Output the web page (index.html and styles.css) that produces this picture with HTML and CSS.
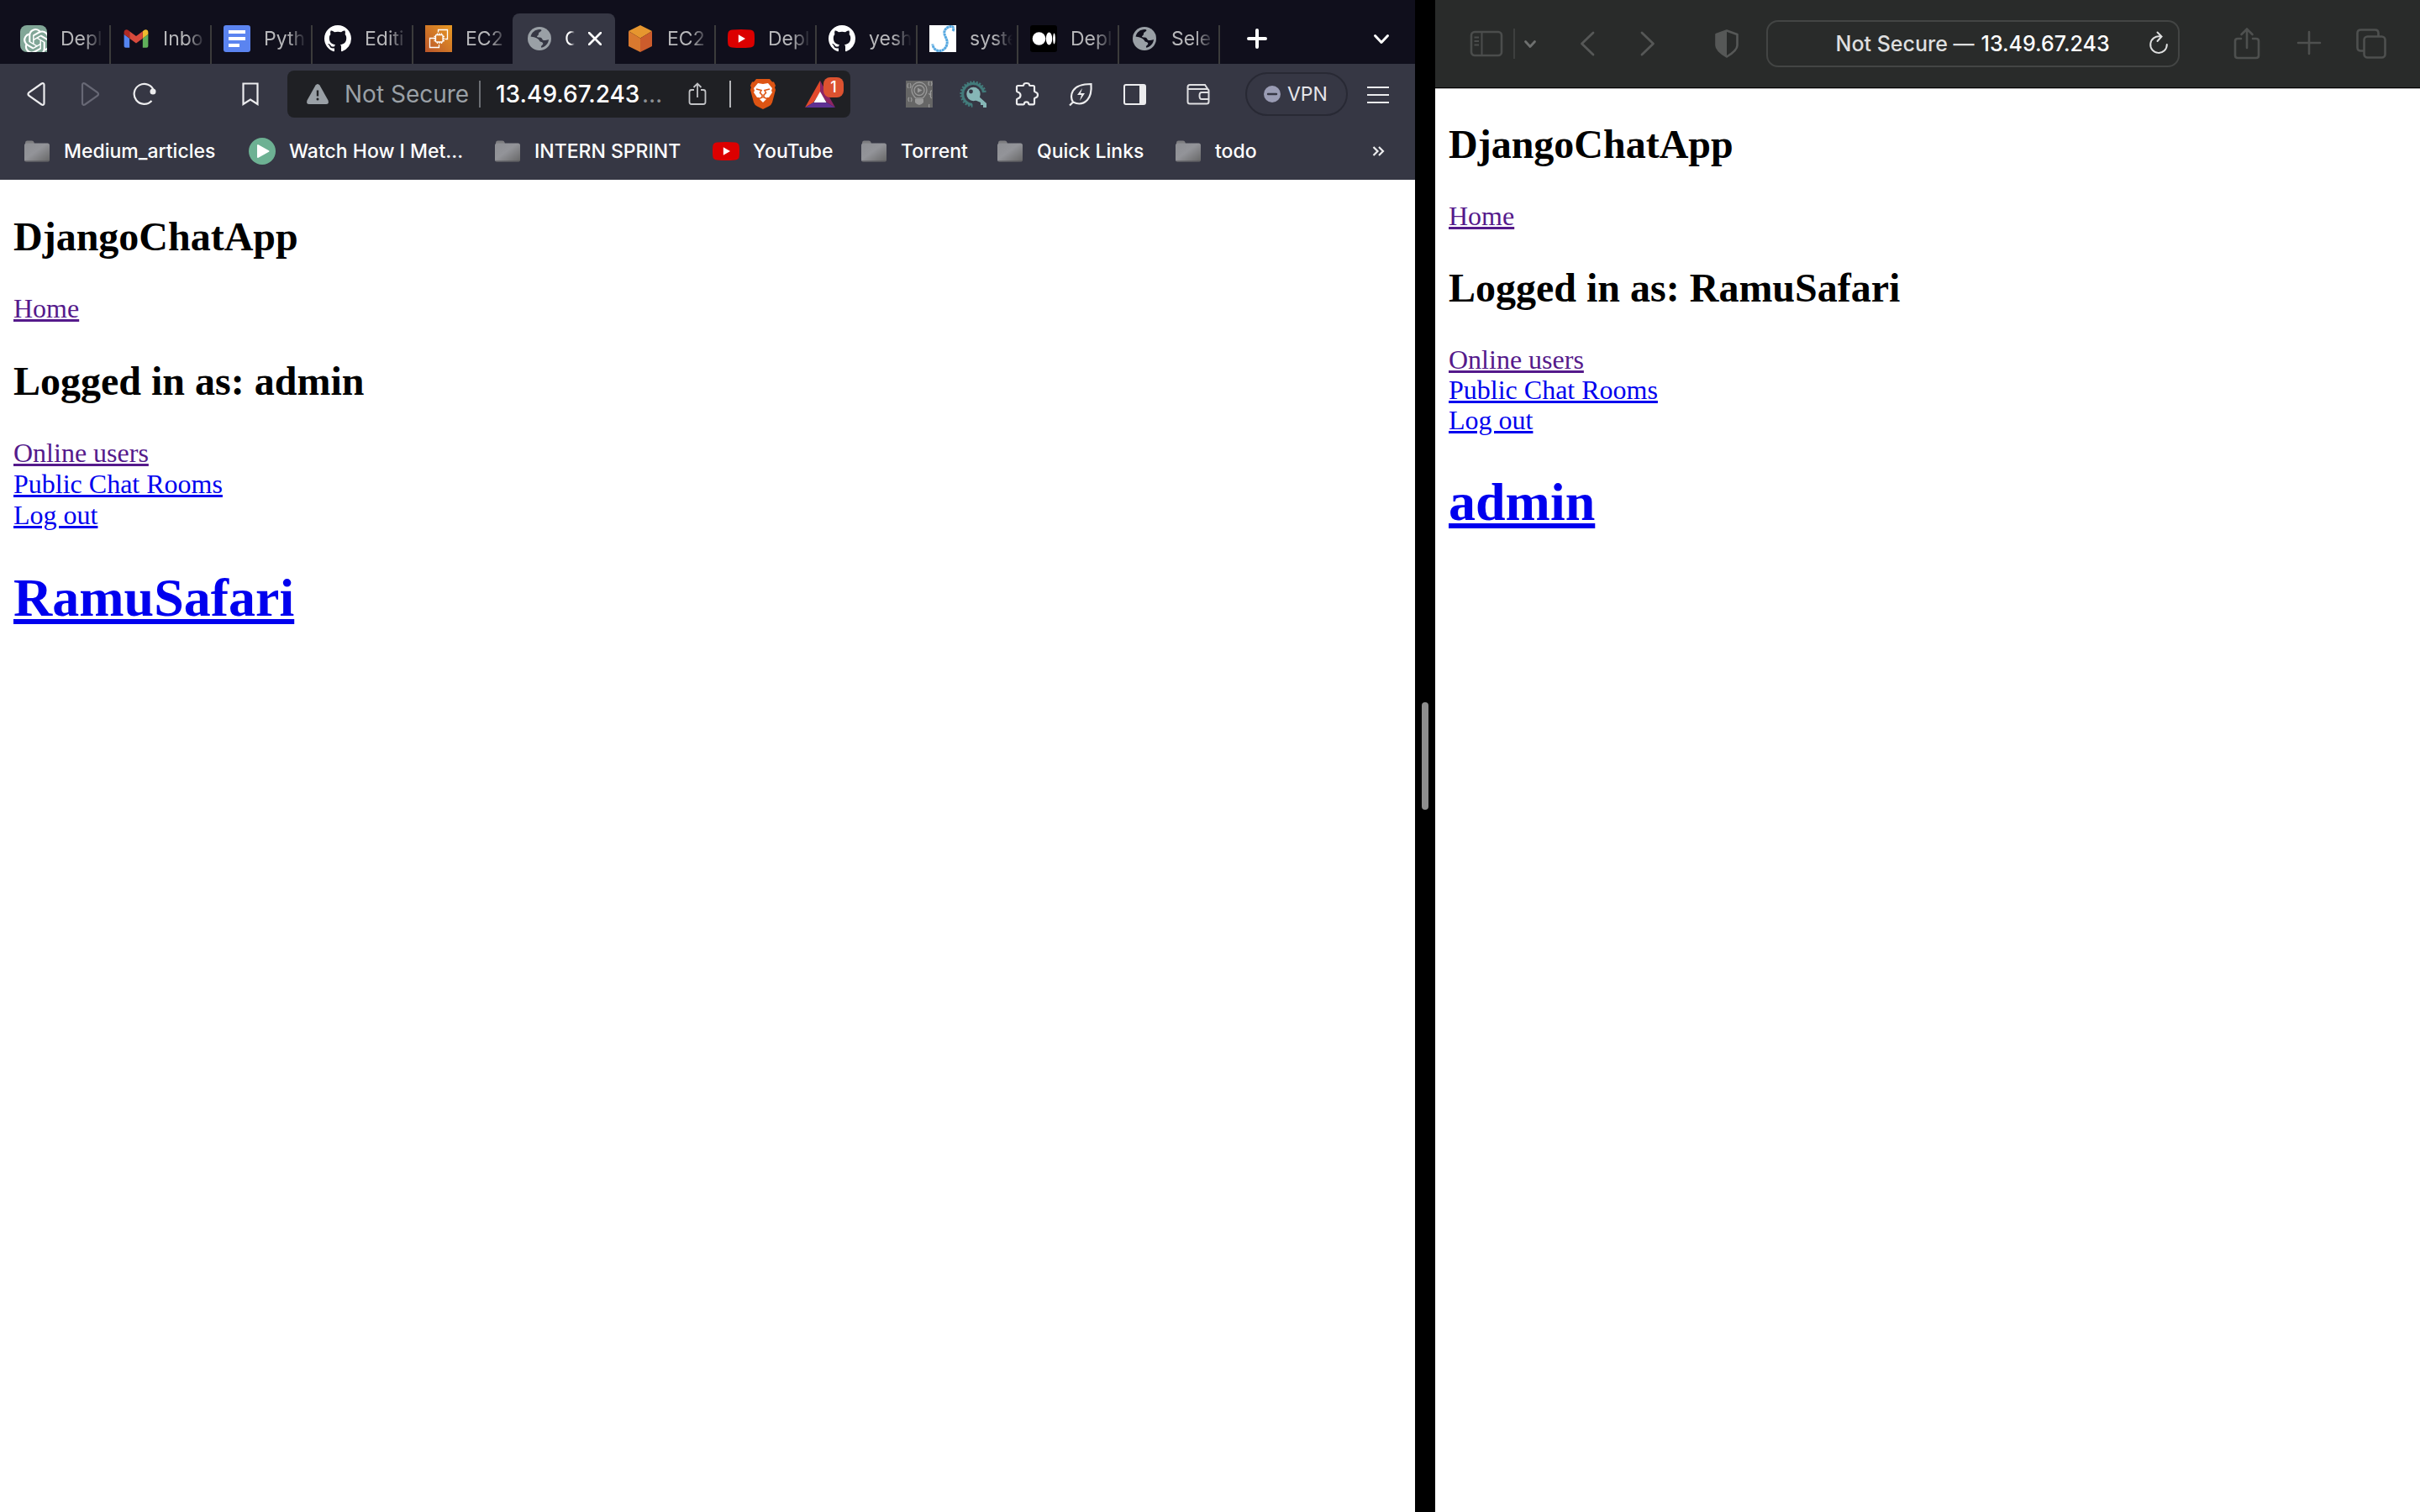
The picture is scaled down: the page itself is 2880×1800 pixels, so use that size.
FILE: index.html
```html
<!DOCTYPE html>
<html lang="en">
<head>
<meta charset="utf-8">
<title>DjangoChatApp</title>
<link rel="stylesheet" href="styles.css">
</head>
<body>
<svg class="sprite" aria-hidden="true">
  <defs>
    <linearGradient id="folderFill" x1="0" y1="0" x2="1" y2="1"><stop offset="0" stop-color="#8d8e93"/><stop offset=".45" stop-color="#939499"/><stop offset="1" stop-color="#666"/></linearGradient>
    <linearGradient id="ec2Fill" x1="0" y1="1" x2="1" y2="0"><stop offset="0" stop-color="#b9552a"/><stop offset="1" stop-color="#e99a24"/></linearGradient>
  </defs>
  <symbol id="folder" viewBox="0 0 32 32">
    <path d="M2 6.500q0-3 2.500-3H10q2 0 2.500 2l.5 2H2z" fill="#7d7d80"/>
    <rect x="1" y="6.500" width="30" height="22" rx="2.500" fill="url(#folderFill)"/>
    <path d="M2 28h28" stroke="#55555a" stroke-width="1"/>
  </symbol>
  <symbol id="globe" viewBox="0 0 32 32">
    <circle cx="16" cy="16" r="14" fill="#9aa0a6"/>
    <path d="M5.500 13.500C6.800 8.500 11 5 16 5c1.500 0 2 .3 2.500 1-.2 1.800-3.500 2-3.500 4.200 0 1.300-.6 2-1.600 2.600-1 .8.300 2 2 1.700 2.600-.3 3.600.7 4 2.300.4 1.500 2.600 1.300 4.800 1 1-.2 2-.4 2.800-.8-.4 4.800-4 8.700-8.600 9.700-1-.8-.3-2.200.6-2.800 1.600-1.200 1.700-2.500.4-3.500-1.200-.9-2.600-.3-3.200-1.700-.8-2-2.500-3-5.200-4-2-.8-4-.8-5.500-1.200z" fill="var(--under)"/>
  </symbol>
  <symbol id="youtube" viewBox="0 0 32 32">
    <path d="M5 5.500q11-1 22 0 4.500.3 4.800 5 .4 5.500 0 11-.3 4.700-4.800 5-11 1-22 0-4.500-.3-4.800-5-.4-5.500 0-11 .3-4.700 4.800-5z" fill="#dc0000"/>
    <path d="M12.800 11.200v9.600l8.200-4.800z" fill="#fff"/>
  </symbol>
  <symbol id="github" viewBox="0 0 16 16">
    <path fill="#fff" d="M8 0C3.580 0 0 3.580 0 8c0 3.540 2.290 6.530 5.470 7.590.4.070.55-.17.55-.38 0-.19-.01-.82-.01-1.490-2.010.37-2.530-.49-2.690-.94-.09-.23-.48-.94-.82-1.130-.28-.15-.68-.52-.01-.53.63-.01 1.080.58 1.230.82.72 1.210 1.870.87 2.330.66.07-.52.28-.87.51-1.070-1.780-.2-3.640-.89-3.640-3.950 0-.87.31-1.590.82-2.150-.08-.2-.36-1.020.08-2.120 0 0 .67-.21 2.200.82.64-.18 1.320-.27 2-.27s1.360.09 2 .27c1.530-1.040 2.200-.82 2.200-.82.44 1.100.16 1.920.08 2.120.51.56.82 1.270.82 2.150 0 3.070-1.870 3.750-3.650 3.950.29.25.54.73.54 1.480 0 1.070-.01 1.930-.01 2.200 0 .21.150.46.550.380A8.010 8.010 0 0016 8c0-4.420-3.580-8-8-8z"/>
  </symbol>
</svg>

<div class="screen">
  <section class="window brave" aria-label="Brave">
    <header>
      <nav class="tabs" aria-label="Tabs">
        <a class="tab" href="#t1"><svg viewBox="0 0 32 32"><path d="M8 0h16a8 8 0 018 8v24H8a8 8 0 01-8-8V8a8 8 0 018-8z" fill="#81a697"/><svg x="4" y="4" width="24" height="24" viewBox="0 0 24 24"><path fill="#fff" d="M22.2819 9.8211a5.9847 5.9847 0 0 0-.5157-4.9108 6.0462 6.0462 0 0 0-6.5098-2.900A6.0651 6.0651 0 0 0 4.9807 4.1818a5.9847 5.9847 0 0 0-3.9977 2.900 6.0462 6.0462 0 0 0 .7427 7.0966 5.980 5.980 0 0 0 .511 4.9107 6.051 6.051 0 0 0 6.5146 2.9001A5.9847 5.9847 0 0 0 13.2599 24a6.0557 6.0557 0 0 0 5.7718-4.2058 5.9894 5.9894 0 0 0 3.9977-2.9001 6.0557 6.0557 0 0 0-.7475-7.0729zm-9.022 12.6081a4.4755 4.4755 0 0 1-2.8764-1.0408l.1419-.0804 4.7783-2.7582a.7948.7948 0 0 0 .3927-.6813v-6.7369l2.020 1.1686a.071.071 0 0 1 .038.052v5.5826a4.504 4.504 0 0 1-4.4945 4.4944zm-9.6607-4.1254a4.4708 4.4708 0 0 1-.5346-3.0137l.142.0852 4.783 2.7582a.7712.7712 0 0 0 .7806 0l5.8428-3.3685v2.3324a.0804.0804 0 0 1-.0332.0615L9.740 19.9502a4.4992 4.4992 0 0 1-6.1408-1.6464zM2.3408 7.8956a4.485 4.485 0 0 1 2.3655-1.9728V11.600a.7664.7664 0 0 0 .3879.6765l5.8144 3.3543-2.0201 1.1685a.0757.0757 0 0 1-.071 0l-4.8303-2.7865A4.504 4.504 0 0 1 2.3408 7.872zm16.5963 3.8558L13.1038 8.364 15.1192 7.200a.0757.0757 0 0 1 .071 0l4.8303 2.7913a4.4944 4.4944 0 0 1-.6765 8.1042v-5.6772a.790.790 0 0 0-.407-.667zm2.0107-3.0231l-.142-.0852-4.7735-2.7818a.7759.7759 0 0 0-.7854 0L9.409 9.2297V6.8974a.0662.0662 0 0 1 .0284-.0615l4.8303-2.7866a4.4992 4.4992 0 0 1 6.6802 4.660zM8.3065 12.863l-2.020-1.1638a.0804.0804 0 0 1-.038-.0567V6.0742a4.4992 4.4992 0 0 1 7.3757-3.4537l-.142.0805L8.704 5.459a.7948.7948 0 0 0-.3927.6813zm1.0976-2.3654l2.602-1.4998 2.6069 1.4998v2.9994l-2.5974 1.4997-2.6067-1.4997Z"/></svg></svg><span>Depl</span></a>
        <a class="tab" href="#t2"><svg viewBox="47 26 98 98"><path fill="#5585f0" d="M58 108h14V74L52 59v43c0 3.320 2.690 6 6 6"/><path fill="#5fb05a" d="M120 108h14c3.320 0 6-2.690 6-6V59l-20 15"/><path fill="#efbc2f" d="M120 48v26l20-15v-8c0-7.420-8.470-11.650-14.400-7.200"/><path fill="#d84a3c" d="M72 74V48l24 18 24-18v26L96 92"/><path fill="#b02a24" d="M52 51v8l20 15V48l-5.600-4.200c-5.940-4.450-14.400-.22-14.400 7.200"/></svg><span>Inbo</span></a>
        <a class="tab" href="#t3"><svg viewBox="0 0 32 32"><rect width="32" height="32" rx="3" fill="#5b84f0"/><path d="M6 8h20M6 16h20M6 24h13" stroke="#fff" stroke-width="4"/></svg><span>Pyth</span></a>
        <a class="tab" href="#t4"><svg><use href="#github"/></svg><span>Editi</span></a>
        <a class="tab tab-before" href="#t5"><svg viewBox="0 0 32 32"><path d="M0 0h32v32H0z" fill="url(#ec2Fill)"/><g fill="none" stroke="#fff" stroke-width="1.300"><path d="M15.500 8.500v-3h11v11h-3M12 15.500H5.500v11h11V23"/><rect x="12.500" y="11.500" width="8.500" height="8.500" rx="1"/><path d="M14.500 11.500v-2M17 11.500v-2M19.500 11.500v-2M14.500 20v2M17 20v2M19.500 20v2M12.500 13.500h-2M12.500 16h-2M12.500 18.500h-2M21 13.500h2M21 16h2M21 18.500h2"/></g></svg><span>EC2</span></a>
        <div class="tab tab-active"><svg><use href="#globe"/></svg><span>C</span><button class="bare tab-close" aria-label="Close tab"><svg viewBox="0 0 16 16"><path d="M1 1l14 14M15 1L1 15" stroke="#fff" stroke-width="2.600" stroke-linecap="round"/></svg></button></div>
        <a class="tab" href="#t7"><svg viewBox="0 0 32 32"><path d="M16 0l14 7-14 8.500L2 7z" fill="#e6962f"/><path d="M2 7l14 8.500V32L2 25z" fill="#d9792f"/><path d="M30 7l-14 8.500V32l14-7z" fill="#cc5c2c"/></svg><span>EC2</span></a>
        <a class="tab" href="#t8"><svg><use href="#youtube"/></svg><span>Depl</span></a>
        <a class="tab" href="#t9"><svg><use href="#github"/></svg><span>yesh</span></a>
        <a class="tab" href="#t10"><svg viewBox="0 0 32 32"><path d="M0 0h32v32H0z" fill="#fff"/><path d="M28 7c2-4 0-6-3-5.500-5 .8-8 5-7 9 .8 3.500 4 7 3 12-1 5-5 8.500-10 8-4-.5-7-4-7-8" fill="none" stroke="#56a8e0" stroke-width="3" stroke-dasharray="3 .4"/></svg><span>syste</span></a>
        <a class="tab" href="#t11"><svg viewBox="0 0 32 32"><rect width="32" height="32" rx="3"/><g fill="#fff"><circle cx="10.500" cy="16" r="7.800"/><ellipse cx="22.500" cy="16" rx="3.700" ry="7.400"/><ellipse cx="28.500" cy="16" rx="1.400" ry="6.500"/></g></svg><span>Depl</span></a>
        <a class="tab" href="#t12"><svg><use href="#globe"/></svg><span>Sele</span></a>
        <button class="bare tab-new" aria-label="New tab"><svg viewBox="0 0 32 32"><path d="M16 6v20M6 16h20" stroke="#fff" stroke-width="4" stroke-linecap="round"/></svg></button>
        <button class="bare tab-search" aria-label="Search tabs"><svg viewBox="0 0 32 32"><path d="M8.500 12.500l7.500 8 7.500-8" fill="none" stroke="#fff" stroke-width="3" stroke-linecap="round" stroke-linejoin="round"/></svg></button>
      </nav>

      <div class="toolbar">
        <div class="nav-buttons">
          <button class="bare" aria-label="Back"><svg viewBox="0 0 28 28"><path d="M19.500 1.500c2-1 3 0 3 1.500v22c0 1.500-1 2.500-3 1.500L4.500 16q-2-2 0-4z" fill="none" stroke="#ececee" stroke-width="2.200"/></svg></button>
          <button class="bare" aria-label="Forward" disabled><svg viewBox="0 0 28 28"><path d="M7 1.500c-2-1-3 0-3 1.500v22c0 1.500 1 2.500 3 1.500L22 16q2-2 0-4z" fill="none" stroke="#676875" stroke-width="2.200"/></svg></button>
          <button class="bare" aria-label="Reload"><svg viewBox="0 0 28 28"><path d="M25 10A12 12 0 1022.500 22" fill="none" stroke="#ececee" stroke-width="2.200"/><circle cx="24" cy="11" r="3.500" fill="#ececee"/></svg></button>
        </div>
        <button class="bare bookmark-page" aria-label="Bookmark this page"><svg viewBox="0 0 28 28"><path d="M5.500 1.500h17v24.500L14 20.500 5.500 26z" fill="none" stroke="#ececee" stroke-width="2.200"/></svg></button>
        <div class="omnibox">
          <svg class="i28" viewBox="0 0 28 28"><path d="M11.500 3.500q2.500-3 5 0l10 18q1.500 4.500-2.500 4.500H4q-4 0-2.500-4.500z" fill="#9aa0a6"/><path d="M14 9.500v7" stroke="#202124" stroke-width="2.400"/><circle cx="14" cy="20" r="1.500" fill="#202124"/></svg>
          <label class="insecure" for="url">Not Secure</label>
          <span class="rule rule-dim"></span>
          <input id="url" class="url" value="13.49.67.243"><span class="url-more">…</span>
          <button class="bare share" aria-label="Share"><svg viewBox="0 0 28 28"><path d="M10 9H7q-2.500 0-2.500 2.500v12Q4.500 26 7 26h14q2.500 0 2.500-2.500v-12Q23.500 9 21 9h-3M14 18V1.500M9.500 6L14 1.500 18.500 6" fill="none" stroke="#c2c3c6" stroke-width="1.800"/></svg></button>
          <span class="rule"></span>
          <button class="bare shields" aria-label="Brave Shields"><svg viewBox="0 0 32 36"><path d="M8 0h16l3 3.500 2 0 2 4.500-1 2 1 3-4 15q-1 3-4 4.500L16 36l-7-3.500q-3-1.500-4-4.500L1 13l1-3-1-2 2-4.500h2z" fill="#dd5413"/><path d="M10 5l6 1 6-1 5 6-1 3 1 2-4 6-2 0-1 2-4 4-4-4-1-2-2 0-4-6 1-2-1-3z" fill="#fff"/><path d="M8 12l6 1.500-1.500 3L15 19v3l-4 1.500M24 12l-6 1.500 1.500 3L17 19v3l4 1.500" fill="none" stroke="#dd5413" stroke-width="1.600"/></svg></button>
          <button class="bare rewards" aria-label="Brave Rewards, 1 notification"><svg viewBox="0 0 40 36"><path d="M20 2L2 34l10-6 8-12z" fill="#e2492c"/><path d="M20 2l18 32-10-6-8-12z" fill="#8d2565"/><path d="M2 34h36l-10-6H12z" fill="#5e3192"/><path d="M20 15l-7.500 13h15z" fill="#fff"/></svg><span class="badge">1</span></button>
        </div>
        <div class="extensions">
          <button class="bare" aria-label="Code ideas"><svg viewBox="0 0 32 32"><path d="M0 0h32v32H0z" fill="#666"/><g fill="none" stroke="#999" stroke-width="1.300"><path d="M12 21q-5-5-5-10a9 9 0 0118 0q0 5-5 10zM3 3q-2 3 0 6M5 9q2-3 0-6M28 1q-2 2 0 5M30 6q2-2 0-5M4 20q-2 2 0 5M6 25q2-2 0-5M31 12q-2 0-1.500 3t-1.500 1q2 0 1.500 2t1.500 3M28 28q-1 2 0 4"/><circle cx="16" cy="11.500" r="6"/></g><path d="M14 8.500v6l5.500-3z" fill="#999"/><path d="M11 22h10v4q-5 6-10 0z" fill="#999"/></svg></button>
          <button class="bare" aria-label="Key finder"><svg viewBox="0 0 32 32"><path d="M30 14A14 14 0 1015.500 30" fill="none" stroke="#427b7b" stroke-width="3.500" stroke-dasharray="2 1.600"/><path d="M28.500 14A12.500 12.500 0 1015 28.500" fill="none" stroke="#427b7b" stroke-width="3"/><circle cx="16.500" cy="16" r="8.200" fill="#86b6b6"/><path d="M18 23l4-5 10 9v5h-4v-3h-3v-3z" fill="#86b6b6"/><circle cx="13.500" cy="13" r="2.400" fill="#363744"/></svg></button>
          <button class="bare" aria-label="Extensions"><svg viewBox="0 0 32 32"><path d="M4 7.500q0-1.500 1.500-1.500h6q.8 0 .8-1 0-2 3.300-2t3.400 2q0 1 .9 1h3.600Q25 6 25 7.500v5q0 1 1.500 1.200 2.500.8 2.500 3.300t-2.500 3.300Q25 20.500 25 21.500v5.300q0 1.500-1.500 1.500H19q-1 0-1-1 0-2-2.500-2T13 27.300q0 1-1 1H5.500Q4 28.300 4 26.800v-4q0-1 1-1.300 3.500-1 3.500-4T5 13.500q-1-.3-1-1.300z" fill="none" stroke="#ececee" stroke-width="2.200"/></svg></button>
          <button class="bare" aria-label="Performance"><svg viewBox="0 0 32 32"><path d="M3 29.500l4-4Q3 19 7 12 12 4 28.500 4q1 13-4.500 19-7 7.500-17 2.500" fill="none" stroke="#ececee" stroke-width="2.200"/><path d="M18 9l-6 8h5l-2 7 6-9h-5z" fill="#ececee"/></svg></button>
          <button class="bare" aria-label="Sidebar"><svg viewBox="0 0 32 32"><rect x="4" y="5" width="25" height="23" rx="2" fill="none" stroke="#ececee" stroke-width="2"/><path d="M22 5h7v23h-7z" fill="#ececee"/></svg></button>
        </div>
        <button class="bare wallet" aria-label="Wallet"><svg viewBox="0 0 32 32"><path d="M27 11V9.500L24 5H6q-2.500 0-2.500 2.500v17.500q0 2.500 2.500 2.500h20q2.500 0 2.500-2.500V12q0-2-2.500-2H4M29 14h-9q-2.500 0-2.500 4t2.500 4h9" fill="none" stroke="#dfdfe2" stroke-width="2"/></svg></button>
        <button class="vpn"><svg viewBox="0 0 20 20"><circle cx="10" cy="10" r="10" fill="#9a9cb4"/><path d="M5 10h10" stroke="#363744" stroke-width="2.400" stroke-linecap="round"/></svg>VPN</button>
        <button class="bare menu" aria-label="Menu"><svg viewBox="0 0 32 32"><path d="M3 8h26M3 17h26M3 26h26" stroke="#ececee" stroke-width="2.200"/></svg></button>
      </div>

      <nav class="bookmarks" aria-label="Bookmarks">
        <a href="#b1"><svg><use href="#folder"/></svg>Medium_articles</a>
        <a href="#b2"><svg viewBox="0 0 32 32"><circle cx="16" cy="16" r="16" fill="#6db193"/><path d="M11 9v14l12.500-7z" fill="#fff" stroke="#fff" stroke-width="2" stroke-linejoin="round"/></svg>Watch How I Met…</a>
        <a href="#b3"><svg><use href="#folder"/></svg>INTERN SPRINT</a>
        <a href="#b4"><svg><use href="#youtube"/></svg>YouTube</a>
        <a href="#b5"><svg><use href="#folder"/></svg>Torrent</a>
        <a href="#b6"><svg><use href="#folder"/></svg>Quick Links</a>
        <a href="#b7"><svg><use href="#folder"/></svg>todo</a>
        <button class="bare" aria-label="More bookmarks"><svg viewBox="0 0 32 32"><path d="M10.500 11l5 5-5 5M17 11l5 5-5 5" fill="none" stroke="#ececee" stroke-width="2.200"/></svg></button>
      </nav>
    </header>
    <main class="page">
      <h2>DjangoChatApp</h2>
      <a class="visited" href="#home">Home</a>
      <h2>Logged in as: admin</h2>
      <div><a class="visited" href="#users">Online users</a></div>
      <div><a href="#rooms">Public Chat Rooms</a></div>
      <div><a href="#logout">Log out</a></div>
      <h1><a href="#ramusafari">RamuSafari</a></h1>
    </main>
  </section>

  <div class="divider" role="separator" aria-orientation="vertical"><span class="grip"></span></div>

  <section class="window safari" aria-label="Safari">
    <header class="safari-bar">
      <button class="bare sidebar" aria-label="Sidebar"><svg viewBox="0 0 40 32"><rect x="2" y="2" width="36" height="28" rx="4" fill="none" stroke="#4b4d4c" stroke-width="2.600"/><path d="M14.500 2v28M5.500 8.500H11M5.500 13H11M5.500 17.500H11" stroke="#4b4d4c" stroke-width="2"/></svg></button>
      <span class="safari-rule"></span>
      <button class="bare groups" aria-label="Tab groups"><svg viewBox="0 0 20 20"><path d="M4.500 7.500l5.500 6 5.500-6" fill="none" stroke="#6e706f" stroke-width="2.800" stroke-linecap="round" stroke-linejoin="round"/></svg></button>
      <button class="bare back" aria-label="Back" disabled><svg viewBox="0 0 28 32"><path d="M21 3L7.500 16 21 29" fill="none" stroke="#565857" stroke-width="2.800" stroke-linecap="round" stroke-linejoin="round"/></svg></button>
      <button class="bare forward" aria-label="Forward" disabled><svg viewBox="0 0 28 32"><path d="M7 3l13.500 13L7 29" fill="none" stroke="#565857" stroke-width="2.800" stroke-linecap="round" stroke-linejoin="round"/></svg></button>
      <button class="bare privacy" aria-label="Privacy report"><svg viewBox="0 0 32 36"><path d="M16 2.500L3.500 7v13q0 6 12.500 13.500Q28.500 26 28.500 20V7z" fill="none" stroke="#565857" stroke-width="2.600" stroke-linejoin="round"/><path d="M16 2.500L3.500 7v13q0 6 12.500 13.500z" fill="#565857"/></svg></button>
      <div class="address">
        <label for="address">Not Secure —</label>
        <input id="address" value="13.49.67.243">
        <button class="bare reload" aria-label="Reload"><svg viewBox="0 0 24 28"><path d="M14 6.500A9.800 9.800 0 1021.800 16M10.500 1.500L15.500 6.500 10.500 12" fill="none" stroke="#dedfdf" stroke-width="2" stroke-linecap="round"/></svg></button>
      </div>
      <div class="safari-actions">
        <button class="bare" aria-label="Share"><svg viewBox="0 0 40 40"><path d="M13 14H9q-3 0-3 3v17q0 3 3 3h22q3 0 3-3V17q0-3-3-3h-4M20 25V3M13.500 9L20 2.500 26.500 9" fill="none" stroke="#4e504f" stroke-width="2.600" stroke-linecap="round"/></svg></button>
        <button class="bare" aria-label="New tab"><svg viewBox="0 0 40 40"><path d="M20 6v26M7 19h26" stroke="#4e504f" stroke-width="2.600" stroke-linecap="round"/></svg></button>
        <button class="bare" aria-label="Tab overview"><svg viewBox="0 0 40 40"><rect x="11.500" y="11.500" width="25" height="25" rx="4" fill="none" stroke="#4e504f" stroke-width="2.600"/><path d="M11 28.500H7.500q-4 0-4-4v-17q0-4 4-4h17q4 0 4 4V11" fill="none" stroke="#4e504f" stroke-width="2.600"/></svg></button>
      </div>
    </header>
    <main class="page">
      <h2>DjangoChatApp</h2>
      <a class="visited" href="#home-2">Home</a>
      <h2>Logged in as: RamuSafari</h2>
      <div><a class="visited" href="#users-2">Online users</a></div>
      <div><a href="#rooms-2">Public Chat Rooms</a></div>
      <div><a href="#logout-2">Log out</a></div>
      <h1><a href="#admin">admin</a></h1>
    </main>
  </section>
</div>
</body>
</html>
```
FILE: styles.css
```css
* { box-sizing: border-box; }

body {
  margin: 0;
  background: #000;
  font-family: Inter, "Liberation Sans", sans-serif;
}

svg { display: block; flex: none; }
.sprite { position: absolute; width: 0; height: 0; }

.screen {
  display: grid;
  grid-template-columns: 1684fr 24px 1172fr;
  min-height: 100vh;
}
.window { background: #fff; min-width: 0; }

.bare {
  display: block;
  flex: none;
  padding: 0;
  border: 0;
  background: none;
  font: inherit;
}

/* Brave: tab strip */
.brave { --under: #100f1c; }
.tabs {
  display: flex;
  align-items: flex-end;
  height: 76px;
  padding: 0 24px 0 10px;
  background: #100f1c;
}
.tab {
  position: relative;
  display: flex;
  align-items: center;
  gap: 16px;
  flex: none;
  width: 120px;
  height: 60px;
  padding-left: 14px;
  font-size: 23px;
  line-height: 32px;
  color: #b7b7ba;
  text-decoration: none;
  white-space: nowrap;
}
.tab:first-child { width: 122px; }
.tab svg { width: 32px; height: 32px; }
.tab span {
  width: 52px;
  overflow: hidden;
  mask-image: linear-gradient(90deg, #000 55%, transparent 98%);
}
.tab::after {
  content: "";
  position: absolute;
  right: 0;
  bottom: 0;
  width: 2px;
  height: 46px;
  background: #3b3b3b;
}
.tab-before::after,
.tab-active::after { display: none; }
.tab-active {
  --under: #363744;
  gap: 14px;
  width: 122px;
  margin-left: -2px;
  padding-left: 16px;
  border-radius: 8px 8px 0 0;
  background: #363744;
  color: #fff;
}
.tab-active span { width: 12px; }
.tab .tab-close svg { width: 16px; height: 16px; }
.tab-close { margin-left: 2px; }
.tab-new, .tab-search { margin-bottom: 14px; }
.tab-new { margin-left: 28px; }
.tab-search { margin-left: auto; }
.tab-new svg, .tab-search svg { width: 32px; height: 32px; }

/* Brave: toolbar */
.toolbar {
  display: flex;
  align-items: center;
  height: 72px;
  padding: 0 28px 0 30px;
  background: #363744;
}
.nav-buttons { display: flex; gap: 36px; }
.nav-buttons svg, .bookmark-page svg, .share svg, .i28 { width: 28px; height: 28px; }
.bookmark-page { margin: 0 30px 0 98px; }
.omnibox {
  display: flex;
  align-items: center;
  flex: 1;
  min-width: 0;
  height: 56px;
  padding: 0 16px 0 22px;
  border-radius: 8px;
  background: #1f2024;
  font-size: 28px;
}
.insecure { width: 160px; margin-left: 18px; color: #9aa0a6; white-space: nowrap; }
.rule { flex: none; width: 2px; height: 32px; background: #b4b5b8; }
.rule-dim { background: #6c6f74; }
input {
  min-width: 0;
  padding: 0;
  border: 0;
  background: none;
  color: #fff;
  font: inherit;
}
.url { width: 174px; margin-left: 18px; font-weight: 500; }
.url-more { color: #8b8e92; }
.share { margin: 0 24px 0 auto; }
.shields { margin: 0 32px 0 22px; }
.shields svg { width: 32px; height: 36px; }
.rewards { position: relative; }
.rewards svg { width: 40px; height: 36px; }
.badge {
  position: absolute;
  top: -2px;
  right: -8px;
  width: 24px;
  height: 24px;
  border-radius: 8px;
  background: #dc5230;
  color: #fff;
  font-size: 18px;
  font-weight: 500;
  line-height: 24px;
  text-align: center;
}
.extensions { display: flex; gap: 32px; margin-left: 66px; }
.extensions svg, .wallet svg, .menu svg { width: 32px; height: 32px; }
.wallet { margin: 0 40px 0 44px; }
.vpn {
  display: flex;
  align-items: center;
  gap: 8px;
  width: 122px;
  height: 52px;
  margin-right: 20px;
  padding: 0 0 0 20px;
  border: 2px solid #282934;
  border-radius: 26px;
  background: none;
  color: #e6e6ea;
  font: 23px Inter, sans-serif;
}
.vpn svg { width: 20px; height: 20px; }

/* Brave: bookmarks bar */
.bookmarks {
  display: grid;
  grid-template-columns: 268px 292px 260px 176px 162px 212px 1fr auto;
  align-items: center;
  height: 66px;
  padding: 0 28px 2px;
  background: #363744;
  font-size: 23px;
  font-weight: 500;
}
.bookmarks a {
  display: flex;
  align-items: center;
  gap: 16px;
  color: #fff;
  text-decoration: none;
  white-space: nowrap;
}
.bookmarks svg { width: 32px; height: 32px; }

/* Web page shown in both windows */
.page {
  display: flow-root;
  padding: 0 16px;
  font: 32px/37px "Liberation Serif", "Times New Roman", serif;
  color: #000;
}
.page h2 { margin: 40px 0; font-size: 48px; line-height: 55px; }
.page h1 { margin: 43px 0; font-size: 64px; line-height: 73px; }
.page a { color: #0000ee; }
.page a.visited { color: #551a8b; }

/* Divider between the two windows */
.divider { display: flex; align-items: center; justify-content: center; background: #000; }
.grip { width: 8px; height: 128px; border-radius: 4px; background: #8d8d8d; }

/* Safari */
.safari-bar {
  position: relative;
  display: flex;
  align-items: center;
  height: 104px;
  padding: 0 38px 0 41px;
  background: #292b2a;
  box-shadow: 0 1px #000, 0 2px #b9b9b9;
}
.safari .page { line-height: 36px; }
.sidebar svg { width: 40px; height: 32px; }
.safari-rule { width: 2px; height: 36px; margin: 0 8px 0 12px; background: #3d3f3e; }
.groups svg { width: 20px; height: 20px; }
.back { margin: 0 44px; }
.back svg, .forward svg { width: 28px; height: 32px; }
.privacy { margin: 0 31px 0 64px; }
.privacy svg { width: 32px; height: 36px; }
.address {
  position: relative;
  display: flex;
  align-items: center;
  justify-content: center;
  gap: 8px;
  flex: 1;
  min-width: 0;
  height: 56px;
  border: 2px solid #434544;
  border-radius: 14px;
  color: #dedfdf;
  font-size: 25px;
  font-weight: 500;
  white-space: nowrap;
}
.address input { width: 154px; }
.reload { position: absolute; right: 11px; top: 11px; }
.reload svg { width: 24px; height: 28px; }
.safari-actions { display: flex; gap: 34px; margin-left: 60px; }
.safari-actions svg { width: 40px; height: 40px; }
```
